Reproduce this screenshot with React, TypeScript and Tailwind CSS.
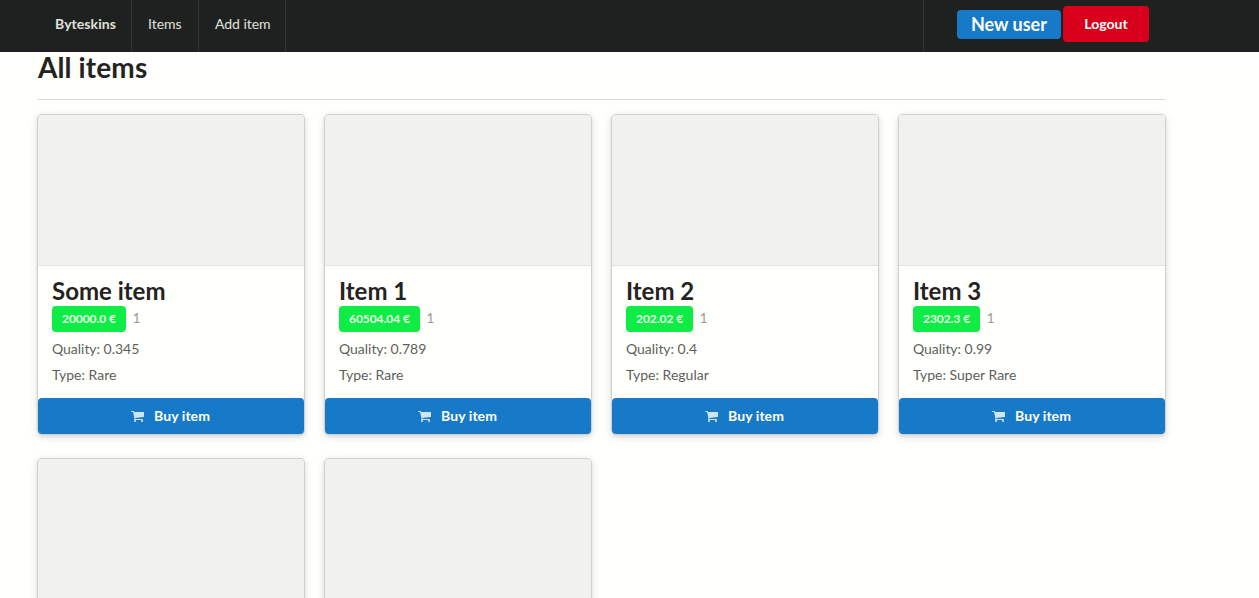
interface ItemDetails {
  name: string;
  price: string;
  stock: number;
  quality: string;
  type: string;
}

interface Item {
  id: number;
  details?: ItemDetails;
}

const items: Item[] = [
  { id: 1, details: { name: 'Some item', price: '20000.0 €', stock: 1, quality: '0.345', type: 'Rare' } },
  { id: 2, details: { name: 'Item 1', price: '60504.04 €', stock: 1, quality: '0.789', type: 'Rare' } },
  { id: 3, details: { name: 'Item 2', price: '202.02 €', stock: 1, quality: '0.4', type: 'Regular' } },
  { id: 4, details: { name: 'Item 3', price: '2302.3 €', stock: 1, quality: '0.99', type: 'Super Rare' } },
  { id: 5 },
  { id: 6 },
];

function CartIcon() {
  return (
    <svg viewBox="0 0 1664 1792" className="h-[14px] w-[13px] opacity-80" fill="currentColor" aria-hidden="true">
      <path d="M640 1536q0 52-38 90t-90 38-90-38-38-90 38-90 90-38 90 38 38 90zm896 0q0 52-38 90t-90 38-90-38-38-90 38-90 90-38 90 38 38 90zm128-1088v512q0 24-16.5 42.5t-40.5 21.5l-1044 122q13 60 13 70 0 16-24 64h920q26 0 45 19t19 45-19 45-45 19h-1024q-26 0-45-19t-19-45q0-11 8-31.5t16-36 21.5-40 15.5-29.5l-177-823h-204q-26 0-45-19t-19-45 19-45 45-19h256q16 0 28.5 6.5t19.5 15.5 13 24.5 8 26 5.5 29.5 4.5 26h1201q26 0 45 19t19 45z" />
    </svg>
  );
}

function Navbar() {
  return (
    <header className="flex h-[52px] justify-between bg-[#1f2120] pr-[110px] pl-[39px] text-[14px] leading-[14px] text-[#e0e1dd]">
      <nav className="flex">
        <a className="flex w-[93px] items-center border-r border-[#323433] pb-1 pl-4 font-bold tracking-[0.07px]">Byteskins</a>
        <a className="flex w-[67px] items-center border-r border-[#323433] pb-1 pl-4">Items</a>
        <a className="flex w-[87px] items-center border-r border-[#323433] pb-1 pl-4 tracking-[-0.05px]">Add item</a>
      </nav>
      <div className="flex items-center gap-[2px] border-l border-[#323433] pb-1 pl-[33px]">
        <button className="h-[29px] w-[104px] rounded-[4px] bg-[#167ac9] text-[18px] leading-[28px] font-bold text-[#fffffb]">
          New user
        </button>
        <button className="h-9 w-[86px] rounded-[4px] bg-[#d9001b] text-[14px] font-bold text-[#fffffb]">Logout</button>
      </div>
    </header>
  );
}

function CardBody({ details }: { details: ItemDetails }) {
  return (
    <>
      <div className="h-[133px] border-t border-[#e2e3e0] bg-[#fffffc] px-[14px] pt-[11px] text-[14px] leading-[20px] text-[#5e5f5c]">
        <h2 className="h-[29px] text-[24px] leading-[28px] font-bold text-[#242322]">{details.name}</h2>
        <div className="flex h-[26px] items-center">
          <span className="flex h-[26px] items-center rounded-[4px] bg-[#10ec46] px-[10px] text-[12px] font-bold tracking-[-0.06px] text-[#e2ffe3]">
            {details.price}
          </span>
          <span className="ml-[6.5px] pb-[2px] text-[#9b9c98]">{details.stock}</span>
        </div>
        <p className="mt-[7px] tracking-[-0.03px]">Quality: {details.quality}</p>
        <p className="mt-[6px]">Type: {details.type}</p>
      </div>
      <button className="flex h-9 shrink-0 items-center justify-center gap-[10px] rounded-[4px] bg-[#167ac9] pr-px text-[14px] leading-[20px] font-bold text-[#fffffb]">
        <CartIcon />
        <span className="tracking-[0.08px]">Buy item</span>
      </button>
    </>
  );
}

function ItemCard({ item }: { item: Item }) {
  return (
    <article className="flex h-[319px] flex-col rounded-[4px] shadow-[0_0_0_1px_#d0d1ce,0_2px_4px_0_rgba(34,36,38,0.12),0_2px_10px_0_rgba(34,36,38,0.15)]">
      <div className="h-[150px] shrink-0 rounded-t-[4px] bg-[#f1f1ee]" />
      {item.details && <CardBody details={item.details} />}
    </article>
  );
}

export default function App() {
  return (
    <div className="h-[598px] overflow-hidden bg-[#fffffc] font-['Lato',sans-serif]">
      <Navbar />
      <main className="ml-[38px] w-[1127px]">
        <h1 className="h-[48px] border-b border-[#dadbd8] text-[28px] leading-[30px] font-bold tracking-[0.12px] text-[#242322]">
          All items
        </h1>
        <section className="mt-[15px] grid grid-cols-[repeat(4,266px)] gap-x-[21px] gap-y-[25px]">
          {items.map((item) => (
            <ItemCard key={item.id} item={item} />
          ))}
        </section>
      </main>
    </div>
  );
}
